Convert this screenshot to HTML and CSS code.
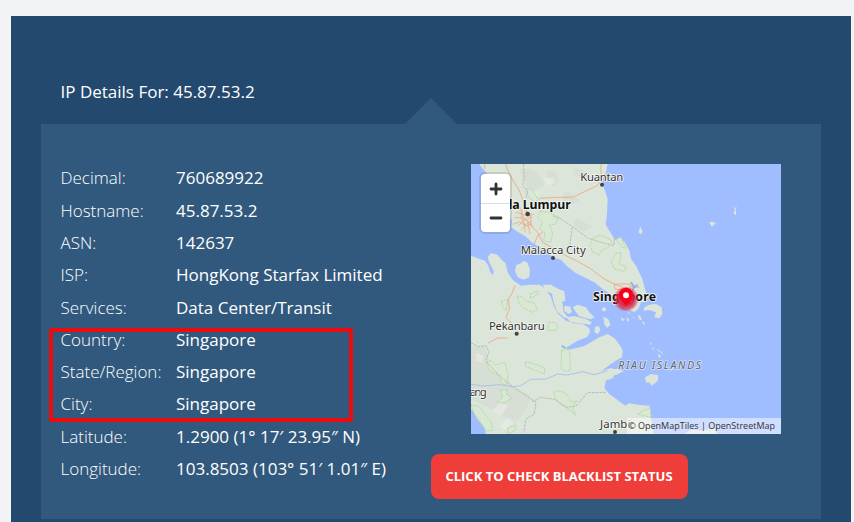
FILE: index.html
```html
<!DOCTYPE html>
<html lang="en">
<head>
<meta charset="utf-8">
<title>IP Details</title>
<link rel="stylesheet" href="styles.css">
</head>
<body>
<main class="lookup">
  <h1 class="title">IP Details For: 45.87.53.2</h1>
  <section class="panel">
    <dl class="details">
      <div class="row"><dt>Decimal:</dt><dd>760689922</dd></div>
      <div class="row"><dt>Hostname:</dt><dd>45.87.53.2</dd></div>
      <div class="row"><dt>ASN:</dt><dd>142637</dd></div>
      <div class="row"><dt>ISP:</dt><dd>HongKong Starfax Limited</dd></div>
      <div class="row"><dt>Services:</dt><dd>Data Center/Transit</dd></div>
      <div class="row"><dt>Country:</dt><dd>Singapore</dd></div>
      <div class="row"><dt>State/Region:</dt><dd>Singapore</dd></div>
      <div class="row"><dt>City:</dt><dd>Singapore</dd></div>
      <div class="row"><dt>Latitude:</dt><dd>1.2900 (1° 17′ 23.95″ N)</dd></div>
      <div class="row"><dt>Longitude:</dt><dd>103.8503 (103° 51′ 1.01″ E)</dd></div>
    </dl>
    <div class="highlight"></div>
    <div class="side">
      <div class="map">
        <svg class="tiles" width="310" height="270" viewBox="0 0 930 810">
          <rect width="930" height="810" fill="#a0bdff"/>
          <g fill="#dce5d9">
            <path d="M25 0 40 20 62 45 80 90 110 150 122 170 120 190 140 203 165 218 182 235 200 246 225 262 245 280 270 287 290 308 315 328 345 342 372 356 395 375 420 392 440 420 465 434 490 444 502 435 510 415 528 412 530 400 522 375 514 345 495 305 480 285 476 262 462 235 448 222 432 228 415 200 404 182 408 150 410 105 402 80 393 60 395 45 405 25 410 0Z"/>
            <path d="M0 275 20 283 42 290 52 305 58 325 66 333 68 322 55 295 50 278 60 268 80 272 92 288 104 297 110 325 125 348 150 365 180 362 205 362 225 375 240 400 248 425 262 450 285 470 310 478 335 480 355 492 357 505 348 520 320 530 295 545 280 553 300 556 340 546 385 520 410 510 430 522 448 545 455 560 453 580 438 588 420 600 390 622 420 612 445 622 442 630 420 638 405 650 400 672 415 690 440 708 462 725 475 718 500 722 535 725 540 760 548 810H45L38 785 18 765 10 745 0 735Z"/>
            <path d="M150 298 160 290 170 297 177 318 175 340 158 347 140 340 132 320 136 303Z"/>
            <path d="M215 362 240 362 262 375 280 382 283 410 270 415 255 395 225 380Z"/>
            <path d="M243 390 265 398 275 420 278 445 292 460 280 462 258 442 248 415Z"/>
            <path d="M280 425 298 428 303 445 292 450 280 440Z"/>
            <path d="M305 430 320 422 345 430 355 445 370 460 358 466 325 457 315 445Z"/>
            <path d="M285 460 310 456 345 465 362 475 358 482 320 477 298 474Z"/>
            <path d="M372 488 384 487 388 498 380 510 370 504Z"/>
            <path d="M397 458 412 465 418 482 408 492 400 480ZM395 430 405 432 404 442 393 440Z"/>
            <path d="M520 430 535 422 555 420 572 430 574 450 565 463 550 460 555 445 535 438 518 440Z"/>
            <path d="M413 617 440 614 458 622 440 630 418 628ZM400 635 420 632 430 640 412 648Z"/>
            <path d="M522 640 540 630 562 634 560 650 543 665 536 656 525 655Z"/>
            <path d="M640 810 660 796 690 800 730 794 740 810ZM502 205 508 188 515 202 510 211Z"/>
            <path d="M715 175 725 173 735 178 727 184 722 188ZM786 122 792 135 797 122 793 145ZM789 141 795 142 795 153 789 151Z"/>
            <path d="M448 460 462 466 455 472ZM465 458 476 468 470 474ZM500 452 508 455 513 468 506 468ZM512 472 522 477 518 483ZM560 570 570 575 565 583ZM595 610 610 613 600 620Z"/>
          </g>
          <g fill="none" stroke="#dce5d9" stroke-width="3"><path d="M558 555 576 570M538 535 542 542M544 550 548 558M470 445 478 449M485 458 490 463"/></g>
          <g class="relief" fill="#d3dacf">
            <path d="M145 20Q190 5 210 45L220 65 180 82 162 60ZM225 25Q250 5 264 50L250 68 232 50ZM310 10 357 28 338 43 308 30ZM285 80 327 108 290 128 272 100ZM315 160 363 188 335 205 308 185Z"/>
            <path d="M0 545 40 550 60 600 92 622 125 665 180 695 165 740 130 780 63 735 0 705Z"/>
          </g>
          <g class="relief" fill="#eef0ea">
            <path d="M220 45 245 40 255 55 232 65ZM180 80 205 87 195 100 175 96ZM15 565 38 575 32 596 15 590ZM85 715 112 725 90 755 65 740ZM110 760 130 773 105 796 85 790Z"/>
          </g>
          <g class="parks">
            <path d="M168 73 185 77 202 108 190 113 175 102 165 85ZM208 142 235 145 262 160 255 180 235 183 245 207 240 235 218 230 222 207 205 195 215 175 200 160Z"/>
            <path d="M368 222 390 213 424 230 412 250 390 260 385 272 365 265 357 243ZM434 268 450 265 445 300 465 308 460 322 430 315 420 295ZM435 225 450 220 465 252 453 250Z"/>
            <path d="M138 396 152 398 165 412 187 416 200 436 185 445 155 430 145 418ZM234 475 250 474 261 488 255 500 228 498ZM272 558 296 556 298 618 284 622 270 615Z"/>
            <path d="M162 594 182 597 221 612 220 630 165 608ZM48 595 60 590 73 603 102 595 112 635 102 665 90 655 85 635 55 620Z"/>
            <path d="M88 678 110 678 105 690 123 702 97 717 78 714 95 700ZM247 685 265 680 285 688 303 715 318 710 305 732 315 755 300 740 270 722 255 705Z"/>
            <path d="M0 722 25 728 45 755 60 772 65 800 45 800 25 770 10 750ZM110 792 135 783 132 800 110 810ZM178 390 200 380 202 390 178 403ZM90 412 110 406 105 440 95 428ZM500 750 520 738 538 732 540 760Z"/>
          </g>
          <g fill="none" stroke="#b9bdb5" stroke-width="3" stroke-dasharray="8 3">
            <path d="M157 0 160 40 155 65 170 82 165 105M245 155 270 165 304 188 350 222 390 235 428 245 432 215M304 190 296 245"/>
            <path d="M0 536 22 548 45 545 54 562 45 590 70 620 105 652 130 672 165 695 195 715 190 750 165 765 158 805M183 714 210 700 250 706 288 730 315 726 350 686 405 685"/>
          </g>
          <g fill="none" stroke="#ecb08d" stroke-width="3">
            <path d="M103 0 120 40 145 80 160 120 168 145M120 110 145 140M170 175 200 205 215 235 275 270 320 292 360 315 400 345 430 360 455 370M205 103 255 100 305 100 340 83 378 65 390 50V0M190 240 200 215 215 205M430 360H478V376H432ZM478 368 505 370"/>
            <path d="M132 365 122 390 112 405 115 435 105 460 122 478M50 538 80 522 110 522M40 0 42 15"/>
          </g>
          <g fill="none" stroke="#e8ad8e" stroke-width="2.4">
            <path d="M132 145 155 150 170 158 190 150M145 125 155 155 163 205M130 160 155 162 184 181M142 185 162 166 185 160M154 135 150 160 160 180 177 195M180 147 178 170 184 190M125 181 145 174 164 185 180 182M145 145 170 172 177 210M150 200 165 180 184 170"/>
          </g>
          <g fill="none" stroke="#a9c4e7" stroke-width="3">
            <path d="M0 661 38 666 85 662 125 668 150 665 178 646 225 645 260 630 290 633 335 623 370 632 410 620"/>
          </g>
          <path d="M480 355 488 366 485 380M488 372 500 362M272 545 282 552" fill="none" stroke="#87aef4" stroke-width="5"/>
          <g class="labels">
            <text x="328" y="51" textLength="129">Kuantan</text>
            <text x="149" y="270" textLength="195">Malacca City</text>
            <text x="54" y="498" textLength="167">Pekanbaru</text>
            <text x="-4" y="697" textLength="51">ang</text>
            <text x="387" y="793" textLength="91">Jambi</text>
          </g>
          <g class="city-labels">
            <text x="113" y="134" textLength="186">la Lumpur</text>
            <text x="366" y="410" textLength="189">Singapore</text>
          </g>
          <text class="region-label" x="442" y="615" textLength="248">RIAU ISLANDS</text>
          <g fill="#414141"><circle cx="393" cy="62" r="6"/><circle cx="170" cy="150" r="7"/><circle cx="246" cy="282" r="6"/><circle cx="137" cy="509" r="6"/><circle cx="432" cy="804" r="6"/></g>
          <circle cx="465" cy="405" r="36" fill="#e0304f" opacity=".45"/>
          <circle cx="465" cy="405" r="31" fill="#d92b49" opacity=".6"/>
          <circle cx="465" cy="404" r="25" fill="#d3203c" opacity=".65"/>
          <path d="M465 427C461 416 444 407 444 392a21 21 0 0 1 42 0C486 407 469 416 465 427Z" fill="#fa0018"/>
          <circle cx="465" cy="394" r="9" fill="#fff"/>
        </svg>
        <div class="zoom-control">
          <button aria-label="Zoom in"><svg width="14" height="14"><path d="M7 2V12M2 7H12"/></svg></button>
          <button aria-label="Zoom out"><svg width="14" height="14"><path d="M2 7H12"/></svg></button>
        </div>
        <div class="attribution">© OpenMapTiles | OpenStreetMap</div>
      </div>
      <button class="blacklist">CLICK TO CHECK BLACKLIST STATUS</button>
    </div>
  </section>
</main>
</body>
</html>
```

FILE: styles.css
```css
* { box-sizing: border-box; }
body {
  margin: 0;
  height: 522px;
  overflow: hidden;
  padding: 16px 3px 0 11px;
  background: #f1f3f4;
  font-family: "Open Sans", sans-serif;
  color: #fff;
}
.lookup {
  height: 506px;
  padding: 62px 30px 0;
  background: #23496f;
}
.title {
  margin: 0 0 18px 19.5px;
  font-size: 17px;
  font-weight: 400;
  line-height: 28px;
}
.panel {
  position: relative;
  display: flex;
  height: 395px;
  padding: 38px 40px 0 19.5px;
  background: #31597e;
}
.panel::before {
  content: "";
  position: absolute;
  left: 364px;
  top: -26px;
  border: 26px solid transparent;
  border-top: 0;
  border-bottom-color: #31597e;
}
.details { width: 370.5px; margin: 0; padding-top: .36px; font-size: 17px; }
.row { display: flex; height: 32.3px; line-height: 32px; white-space: nowrap; }
dt { width: 115.5px; font-weight: 300; }
dd { margin: 0; }
.highlight {
  position: absolute;
  left: 8px;
  top: 204px;
  width: 304px;
  height: 94px;
  border: 4px solid #ed0b0e;
  border-radius: 2px;
}
.side { padding-top: 2px; }
.map {
  position: relative;
  width: 310px;
  height: 270px;
  margin-left: 40px;
  overflow: hidden;
}
.tiles { display: block; }
.relief { opacity: .55; filter: blur(2px); }
.parks { fill: #d9e8d2; stroke: #a0d494; stroke-width: 2.4px; stroke-dasharray: 5 3; }
.labels text, .city-labels text, .region-label {
  font-family: "Noto Sans", sans-serif;
  font-size: 34px;
  fill: #333;
  stroke: #f3f5f1;
  stroke-width: 5px;
  paint-order: stroke;
  stroke-linejoin: round;
}
.city-labels text { font-size: 37px; font-weight: 700; fill: #111; }
.region-label { font-size: 31px; font-style: italic; fill: #5d6572; stroke: #d5e0f6; }
.zoom-control {
  position: absolute;
  left: 10px;
  top: 10px;
  width: 29px;
  background: #fff;
  border-radius: 4px;
  box-shadow: 0 0 0 2px rgba(0, 0, 0, .1);
}
.zoom-control button {
  display: grid;
  place-items: center;
  width: 29px;
  height: 29px;
  padding: 0;
  border: 0;
  background: none;
}
.zoom-control button + button { border-top: 1px solid #ddd; }
.zoom-control path { fill: none; stroke: #333; stroke-width: 2.8; stroke-linecap: round; }
.attribution {
  position: absolute;
  right: 0;
  bottom: 0;
  width: 154px;
  height: 16px;
  padding-right: 6px;
  background: rgba(255, 255, 255, .5);
  color: #333;
  font-size: 9px;
  line-height: 16px;
  text-align: right;
  white-space: nowrap;
}
.blacklist {
  display: block;
  width: 257px;
  height: 45px;
  margin-top: 20px;
  padding: 0 1px 2px 0;
  border: 0;
  border-radius: 8px;
  background: #ef3e3a;
  color: #fff;
  font: 700 13px "Open Sans", sans-serif;
  white-space: nowrap;
}
```
